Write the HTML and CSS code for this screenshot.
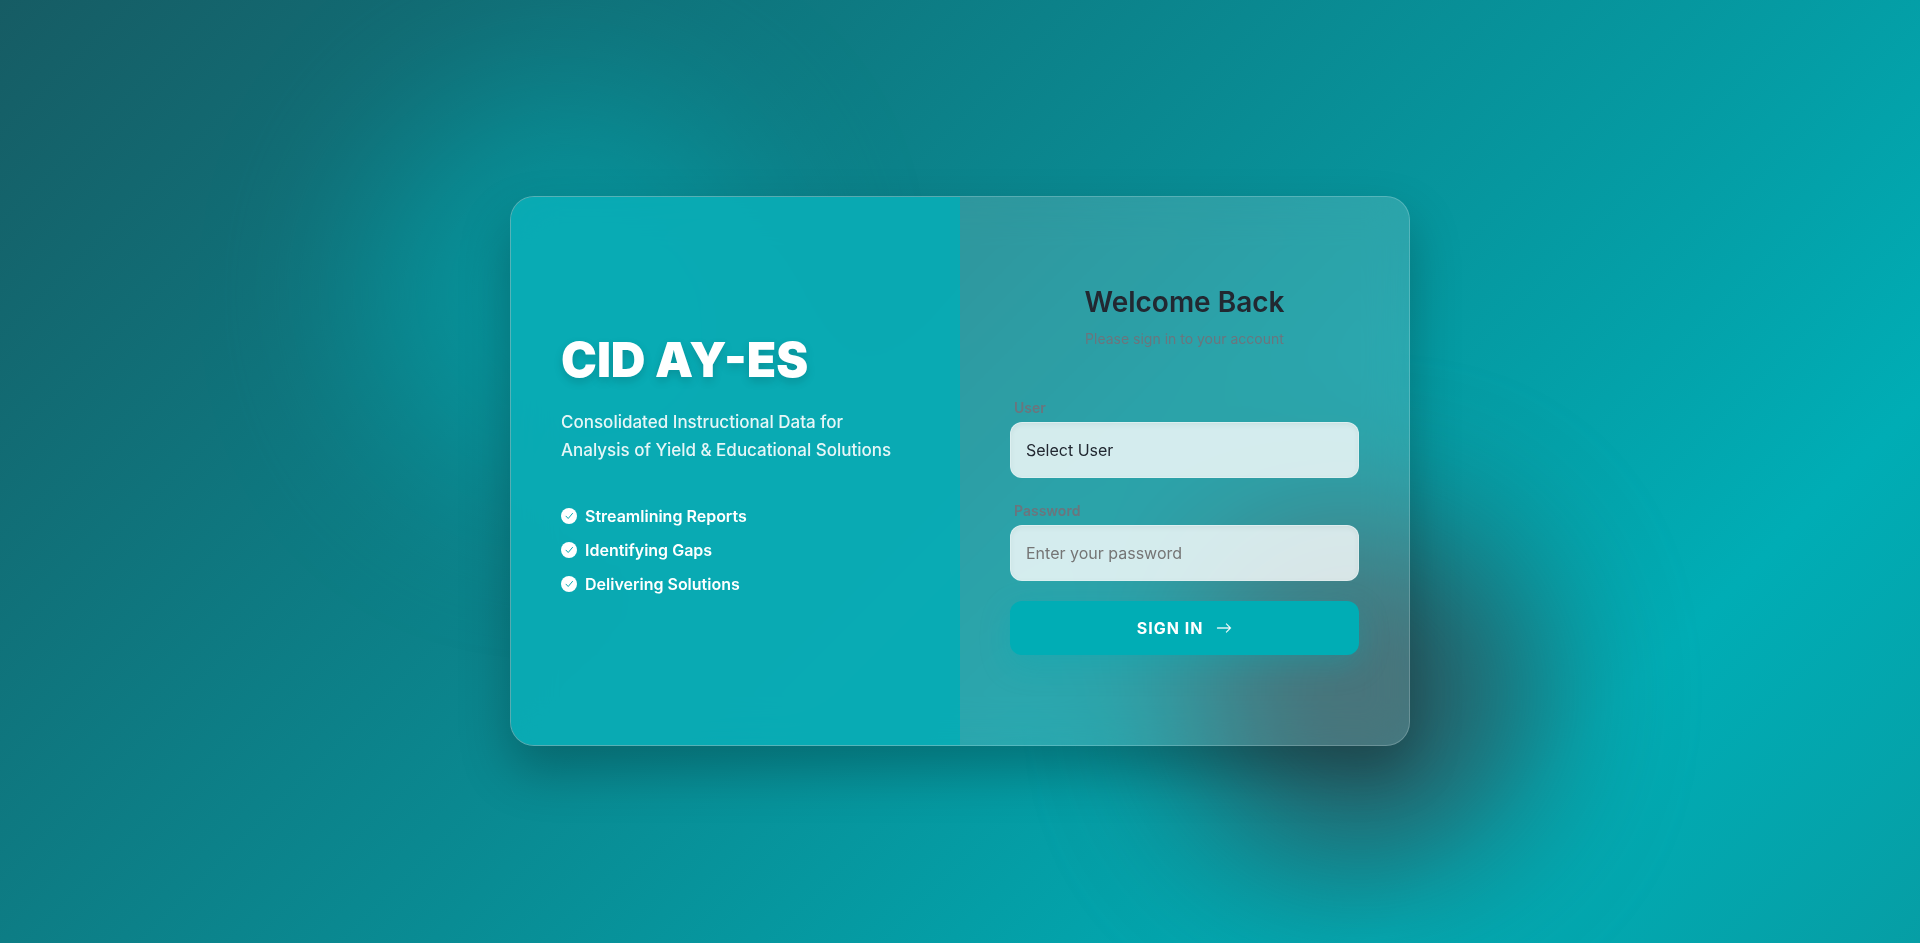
FILE: index.html
```html
<!DOCTYPE html>
<html lang="en">
<head>
    <meta charset="UTF-8">
    <meta name="viewport" content="width=device-width, initial-scale=1.0">
    <title>CID AY-ES - Sign In</title>
    <link rel="stylesheet" href="styles.css">
</head>
<body>
    <!-- Background shapes -->
    <div class="shape shape-1"></div>
    <div class="shape shape-2"></div>

    <main class="login-card">
        <section class="brand-panel">
            <h1>CID AY-ES</h1>
            <p class="tagline">Consolidated Instructional Data for Analysis of Yield &amp; Educational Solutions</p>
            <ul class="features">
                <li>
                    <svg viewBox="0 0 16 16" aria-hidden="true"><circle cx="8" cy="8" r="8" fill="#fff"/><path d="M5 8.2l2.2 2.3 4.3-5.1" fill="none" stroke="#0caab3" stroke-linecap="round" stroke-linejoin="round"/></svg>
                    Streamlining Reports
                </li>
                <li>
                    <svg viewBox="0 0 16 16" aria-hidden="true"><circle cx="8" cy="8" r="8" fill="#fff"/><path d="M5 8.2l2.2 2.3 4.3-5.1" fill="none" stroke="#0caab3" stroke-linecap="round" stroke-linejoin="round"/></svg>
                    Identifying Gaps
                </li>
                <li>
                    <svg viewBox="0 0 16 16" aria-hidden="true"><circle cx="8" cy="8" r="8" fill="#fff"/><path d="M5 8.2l2.2 2.3 4.3-5.1" fill="none" stroke="#0caab3" stroke-linecap="round" stroke-linejoin="round"/></svg>
                    Delivering Solutions
                </li>
            </ul>
        </section>

        <section class="form-panel">
            <div class="form-header">
                <h2>Welcome Back</h2>
                <p>Please sign in to your account</p>
            </div>
            <form id="login-form">
                <div class="form-group">
                    <label for="user">User</label>
                    <select id="user">
                        <option value="" selected>Select User</option>
                    </select>
                </div>
                <div class="form-group">
                    <label for="password">Password</label>
                    <input type="password" id="password" placeholder="Enter your password">
                </div>
                <button type="submit" class="sign-in-btn">
                    SIGN IN
                    <svg viewBox="0 0 16 16" aria-hidden="true"><path fill="currentColor" fill-rule="evenodd" d="M1 8a.5.5 0 0 1 .5-.5h11.793l-3.147-3.146a.5.5 0 0 1 .708-.708l4 4a.5.5 0 0 1 0 .708l-4 4a.5.5 0 0 1-.708-.708L13.293 8.5H1.5A.5.5 0 0 1 1 8z" stroke="currentColor" stroke-width=".3"/></svg>
                </button>
            </form>
        </section>
    </main>
</body>
</html>
```
FILE: styles.css
```css
* {
    box-sizing: border-box;
    margin: 0;
    padding: 0;
}

body {
    font-family: 'Inter', sans-serif;
    min-height: 100vh;
    padding-bottom: 1px;
    display: flex;
    justify-content: center;
    align-items: center;
    overflow: hidden;
    position: relative;
    background: linear-gradient(135deg, #165c64 0%, #00adb5 81%, #069ea5 100%);
}

/* Background shapes */
.shape {
    position: absolute;
    border-radius: 50%;
    filter: blur(80px);
}

.shape-1 {
    width: 400px;
    height: 400px;
    top: 10%;
    left: 19%;
    background: #00adb5;
    opacity: 0.5;
}

.shape-2 {
    width: 350px;
    height: 350px;
    right: 20%;
    bottom: 8%;
    background: #393e46;
    opacity: 0.75;
}

.login-card {
    position: relative;
    display: flex;
    width: 90%;
    max-width: 900px;
    min-height: 550px;
    border-radius: 24px;
    border: 1px solid rgba(255, 255, 255, 0.2);
    background: rgba(255, 255, 255, 0.15);
    backdrop-filter: blur(20px);
    box-shadow: 0 25px 50px rgba(0, 0, 0, 0.25);
    overflow: hidden;
}

.brand-panel,
.form-panel {
    flex: 1;
    padding: 50px;
    display: flex;
    flex-direction: column;
    justify-content: center;
}

.form-panel {
    padding-bottom: 52px;
}

.brand-panel {
    background: rgba(4, 173, 182, 0.85);
    color: #fff;
}

.brand-panel h1 {
    font-size: 48px;
    font-weight: 900;
    line-height: 48px;
    margin-bottom: 24px;
    text-shadow: 0 4px 10px rgba(0, 0, 0, 0.15);
}

.tagline {
    font-size: 17px;
    font-weight: 500;
    line-height: 28px;
    opacity: 0.9;
}

.features {
    list-style: none;
    margin-top: 40px;
}

.features li {
    display: flex;
    align-items: center;
    gap: 8px;
    font-size: 16px;
    font-weight: 600;
    line-height: 24px;
    margin-bottom: 10px;
}

.features svg {
    width: 16px;
    height: 16px;
}

.form-header {
    text-align: center;
    margin-bottom: 44px;
}

.form-header h2 {
    font-size: 28px;
    font-weight: 600;
    line-height: 34px;
    color: #222831;
    margin-bottom: 8px;
}

.form-header p {
    font-size: 14px;
    line-height: 24px;
    color: #6c757d;
}

.form-group {
    margin-bottom: 20px;
}

.form-group label {
    display: block;
    font-size: 14px;
    font-weight: 600;
    line-height: 26px;
    color: #6c757d;
    margin: 0 0 1px 4px;
}

.form-group input,
.form-group select {
    display: block;
    width: 100%;
    height: 56px;
    padding: 0 15px;
    font-family: inherit;
    font-size: 16px;
    color: #222831;
    border: 1px solid rgba(255, 255, 255, 0.2);
    border-radius: 12px;
    background: rgba(255, 255, 255, 0.8);
    box-shadow: inset 0 2px 5px rgba(0, 0, 0, 0.05);
    appearance: none;
    outline: none;
}

.form-group input:focus,
.form-group select:focus {
    border-color: #00adb5;
}

.sign-in-btn {
    display: flex;
    justify-content: center;
    align-items: center;
    gap: 13px;
    width: 100%;
    height: 54px;
    font-family: inherit;
    font-size: 16px;
    font-weight: 700;
    letter-spacing: 1px;
    color: #fff;
    background: #00adb5;
    border: none;
    border-radius: 12px;
    box-shadow: 0 10px 30px rgba(0, 173, 181, 0.3);
    cursor: pointer;
}

.sign-in-btn:hover {
    background: #009aa1;
}

.sign-in-btn svg {
    width: 16px;
    height: 16px;
}

@media (max-width: 768px) {
    .login-card {
        flex-direction: column;
    }
}
```
